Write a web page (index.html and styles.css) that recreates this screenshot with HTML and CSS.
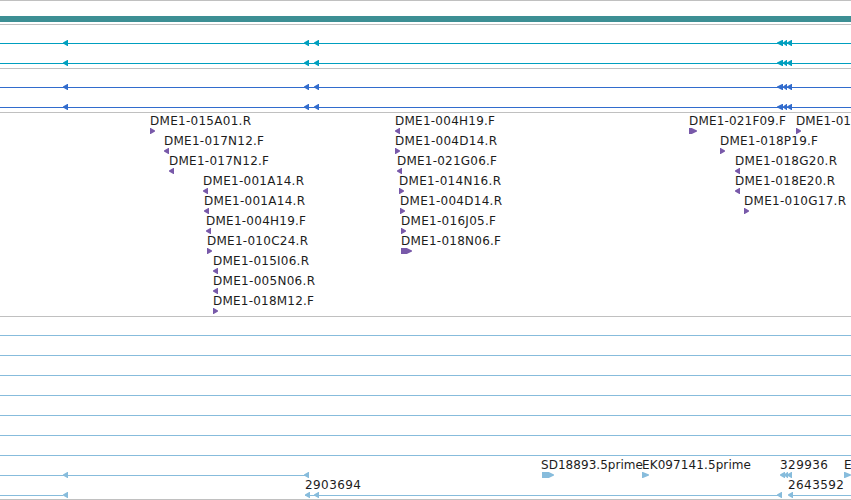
FILE: index.html
```
<!DOCTYPE html>
<html lang="en">
<head>
    <meta charset="UTF-8">
    <meta name="viewport" content="width=device-width, initial-scale=1.0">
    <title>Genome view</title>
    <link rel="stylesheet" href="styles.css">
</head>
<body>
    <div class="browser" id="browser"></div>
    <script src="tracks.js"></script>
</body>
</html>
```
FILE: styles.css
```
body {
    margin: 0;
    background: #fff;
    color: #000;
    font-family: 'DejaVu Sans', sans-serif;
    font-size: 12px;
    overflow: hidden;
}
.browser {
    display: flex;
    flex-direction: column;
    width: 851px;
    height: 500px;
    overflow: hidden;
}
.track {
    flex: none;
    border-top: 1px solid #c0c0c0;
}
.contig {
    height: 8px;
    padding-top: 15px;
}
.contig-bar {
    height: 6px;
    background: #3d8f94;
}
.genes {
    padding-bottom: 4px;
}
.clones {
    padding-bottom: 3px;
}
.est {
    border-bottom: 1px solid #c0c0c0;
    padding-bottom: 3px;
}
.row {
    position: relative;
    height: 20px;
}
.genes .row:first-child,
.est .row:first-child {
    height: 19px;
}
.teal { color: #009fbf; }
.blue { color: #326ccd; }
.purple { color: #7859a9; }
.sky { color: #87bcdc; }

/* features sit at their own position along the sequence */
.line {
    position: absolute;
    bottom: 0;
    height: 1px;
    background: currentColor;
}
.arrow {
    position: absolute;
    bottom: -2px;
    height: 6px;
    fill: currentColor;
}
.clones .arrow {
    bottom: -1px;
}
.label {
    position: absolute;
    top: 0;
    height: 14px;
    overflow: visible;
    fill: #1c1c1c;
}
.est .label {
    top: 1px;
}
```
FILE: tracks.js
```
// line: [from, to], left/right: arrow positions [x, width], labels: [x, width, text]
const tracks = [
    { type: 'contig' },
    { type: 'genes', color: 'teal', rows: geneRows() },
    { type: 'genes', color: 'blue', rows: geneRows() },
    { type: 'clones', color: 'purple', rows: [
        { labels: [[150, 101, 'DME1-015A01.R'], [395, 100, 'DME1-004H19.F'], [689, 97, 'DME1-021F09.F'], [796, 55, 'DME1-01']], left: [[395, 5]], right: [[150, 5], [689, 8], [796, 5]] },
        { labels: [[164, 100, 'DME1-017N12.F'], [395, 102, 'DME1-004D14.R'], [720, 98, 'DME1-018P19.F']], left: [[164, 5]], right: [[395, 5], [720, 5]] },
        { labels: [[169, 100, 'DME1-017N12.F'], [397, 100, 'DME1-021G06.F'], [735, 102, 'DME1-018G20.R']], left: [[169, 5], [397, 5], [735, 5]] },
        { labels: [[203, 101, 'DME1-001A14.R'], [399, 102, 'DME1-014N16.R'], [735, 100, 'DME1-018E20.R']], left: [[203, 5], [735, 5]], right: [[399, 5]] },
        { labels: [[204, 101, 'DME1-001A14.R'], [400, 102, 'DME1-004D14.R'], [744, 102, 'DME1-010G17.R']], left: [[204, 5]], right: [[400, 5], [744, 5]] },
        { labels: [[206, 100, 'DME1-004H19.F'], [401, 95, 'DME1-016J05.F']], left: [[206, 5]], right: [[401, 5]] },
        { labels: [[207, 101, 'DME1-010C24.R'], [401, 100, 'DME1-018N06.F']], right: [[207, 5], [401, 11]] },
        { labels: [[213, 96, 'DME1-015I06.R']], left: [[213, 5]] },
        { labels: [[213, 102, 'DME1-005N06.R']], left: [[213, 5]] },
        { labels: [[213, 101, 'DME1-018M12.F']], right: [[213, 5]] }
    ] },
    { type: 'est', color: 'sky', rows: [
        ...Array.from({ length: 7 }, () => ({ lines: [[0, 851]] })),
        { lines: [[0, 305]], left: [[63, 5], [304, 5], [780, 5], [784, 4], [787, 5]], right: [[542, 12], [642, 7], [844, 7]],
          labels: [[541, 102, 'SD18893.5prime'], [642, 109, 'EK097141.5prime'], [780, 48, '329936'], [844, 7, 'E']] },
        { lines: [[0, 63], [305, 778], [789, 851]], left: [[63, 5], [305, 5], [314, 5], [777, 5], [788, 5]],
          labels: [[305, 56, '2903694'], [788, 56, '2643592']] }
    ] }
];

function geneRows() {
    const row = { lines: [[0, 851]], left: [[63, 5], [304, 5], [314, 5], [777, 6], [783, 4], [787, 5]] };
    return [row, row];
}

// wide arrows get a straight body before the tip
function arrow(x, w, dir) {
    const body = w > 7 ? w - 6 : 0;
    const points = dir === 'left'
        ? `0,2.5 ${w},-0.4 ${w},6.4 0,3.5`
        : `0,-0.4 ${body},-0.4 ${w},2.5 ${w},3.5 ${body},6.4 0,6.4`;
    return `<svg class="arrow" width="${w}" height="6" style="left:${x}px"><polygon points="${points}"/></svg>`;
}

function rowHtml(row) {
    let html = '';
    for (const [a, b] of row.lines || []) {
        html += `<div class="line" style="left:${a}px;width:${b - a}px"></div>`;
    }
    for (const [x, w] of row.left || []) html += arrow(x, w, 'left');
    for (const [x, w] of row.right || []) html += arrow(x, w, 'right');
    for (const [x, w, text] of row.labels || []) {
        html += `<svg class="label" width="${w}" height="14" style="left:${x}px"><text x="0" y="12" textLength="${w}">${text}</text></svg>`;
    }
    return `<div class="row">${html}</div>`;
}

document.getElementById('browser').innerHTML = tracks.map(t =>
    t.type === 'contig'
        ? '<div class="track contig"><div class="contig-bar"></div></div>'
        : `<div class="track ${t.type} ${t.color}">${t.rows.map(rowHtml).join('')}</div>`
).join('');
```
